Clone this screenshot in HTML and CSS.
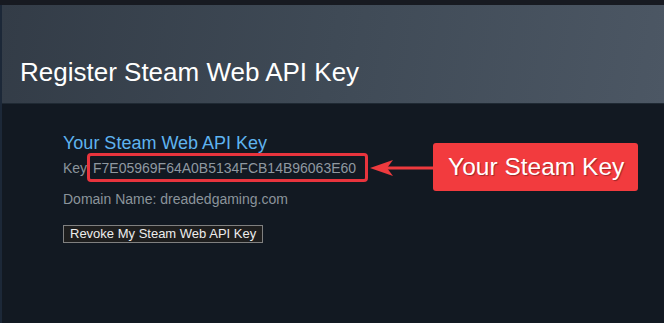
FILE: index.html
```html
<!DOCTYPE html>
<html lang="en">
<head>
    <meta charset="UTF-8">
    <title>Register Steam Web API Key</title>
    <link rel="stylesheet" href="styles.css">
</head>
<body>
    <div class="topbar"></div>
    <div class="page">
        <div class="page-header">
            <h1 class="page-title">Register Steam Web API Key</h1>
        </div>

        <div class="content">
            <h2 class="section-title">Your Steam Web API Key</h2>

            <div class="key-row">
                <span class="label">Key:</span>
                <span class="key-box">F7E05969F64A0B5134FCB14B96063E60</span>
                <svg class="arrow" viewBox="0 0 63 18" width="63" height="18">
                    <path d="M10 9 L63 9" stroke="#ee3a3e" stroke-width="3"/>
                    <path d="M0 9 L23 1 L17 9 L23 17 Z" fill="#ee3a3e"/>
                </svg>
                <span class="callout">Your Steam Key</span>
            </div>

            <p class="domain">Domain Name: dreadedgaming.com</p>

            <button type="button" class="revoke">Revoke My Steam Web API Key</button>
        </div>
    </div>
</body>
</html>
```

FILE: styles.css
```css
* {
    margin: 0;
    padding: 0;
    box-sizing: border-box;
}

body {
    font-family: "Liberation Sans", Arial, sans-serif;
    background-color: #121922;
    min-height: 323px;
    overflow: hidden;
}

.topbar {
    height: 5px;
    background-color: #171a21;
}

.page {
    border-left: 2px solid #1c2838;
    min-height: 318px;
}

/* Header */
.page-header {
    height: 99px;
    background: linear-gradient(100deg, #333c47 0%, #3f4a56 50%, #4c5764 100%);
    border-bottom: 1px solid #1f2933;
    display: flex;
    align-items: flex-end;
    padding: 0 0 16px 18px;
}

.page-title {
    font-size: 26px;
    font-weight: 400;
    color: #ffffff;
    line-height: 30px;
}

/* Content */
.content {
    padding: 29px 0 0 61px;
}

.section-title {
    font-size: 18px;
    font-weight: 400;
    color: #5fb3ef;
    line-height: 20px;
}

.key-row {
    display: flex;
    align-items: center;
}

.label {
    font-size: 14px;
    line-height: 16px;
    color: #8b949b;
}

.key-box {
    font-size: 14px;
    line-height: 16px;
    color: #8f98a0;
    border: 3px solid #e8343d;
    border-radius: 4px;
    padding: 4px 9px 3px 3px;
    margin-left: -4px;
}

.arrow {
    margin-left: 2px;
}

.callout {
    background-color: #f23b3e;
    color: #ffffff;
    font-size: 24.5px;
    line-height: 28px;
    border-radius: 3px;
    padding: 10px 14px 10px 15px;
    margin: -10px 0 -9px 0;
    text-shadow: 1px 1px 1px rgba(0, 0, 0, 0.35);
}

.domain {
    font-size: 14px;
    line-height: 16px;
    color: #8b949b;
    margin-top: 9px;
}

.revoke {
    margin-top: 18px;
    font-family: "Liberation Sans", Arial, sans-serif;
    font-size: 13px;
    color: #ededed;
    background-color: #1e1e1e;
    border: 1px solid #808080;
    padding: 0 6px;
    line-height: 16px;
}
```
